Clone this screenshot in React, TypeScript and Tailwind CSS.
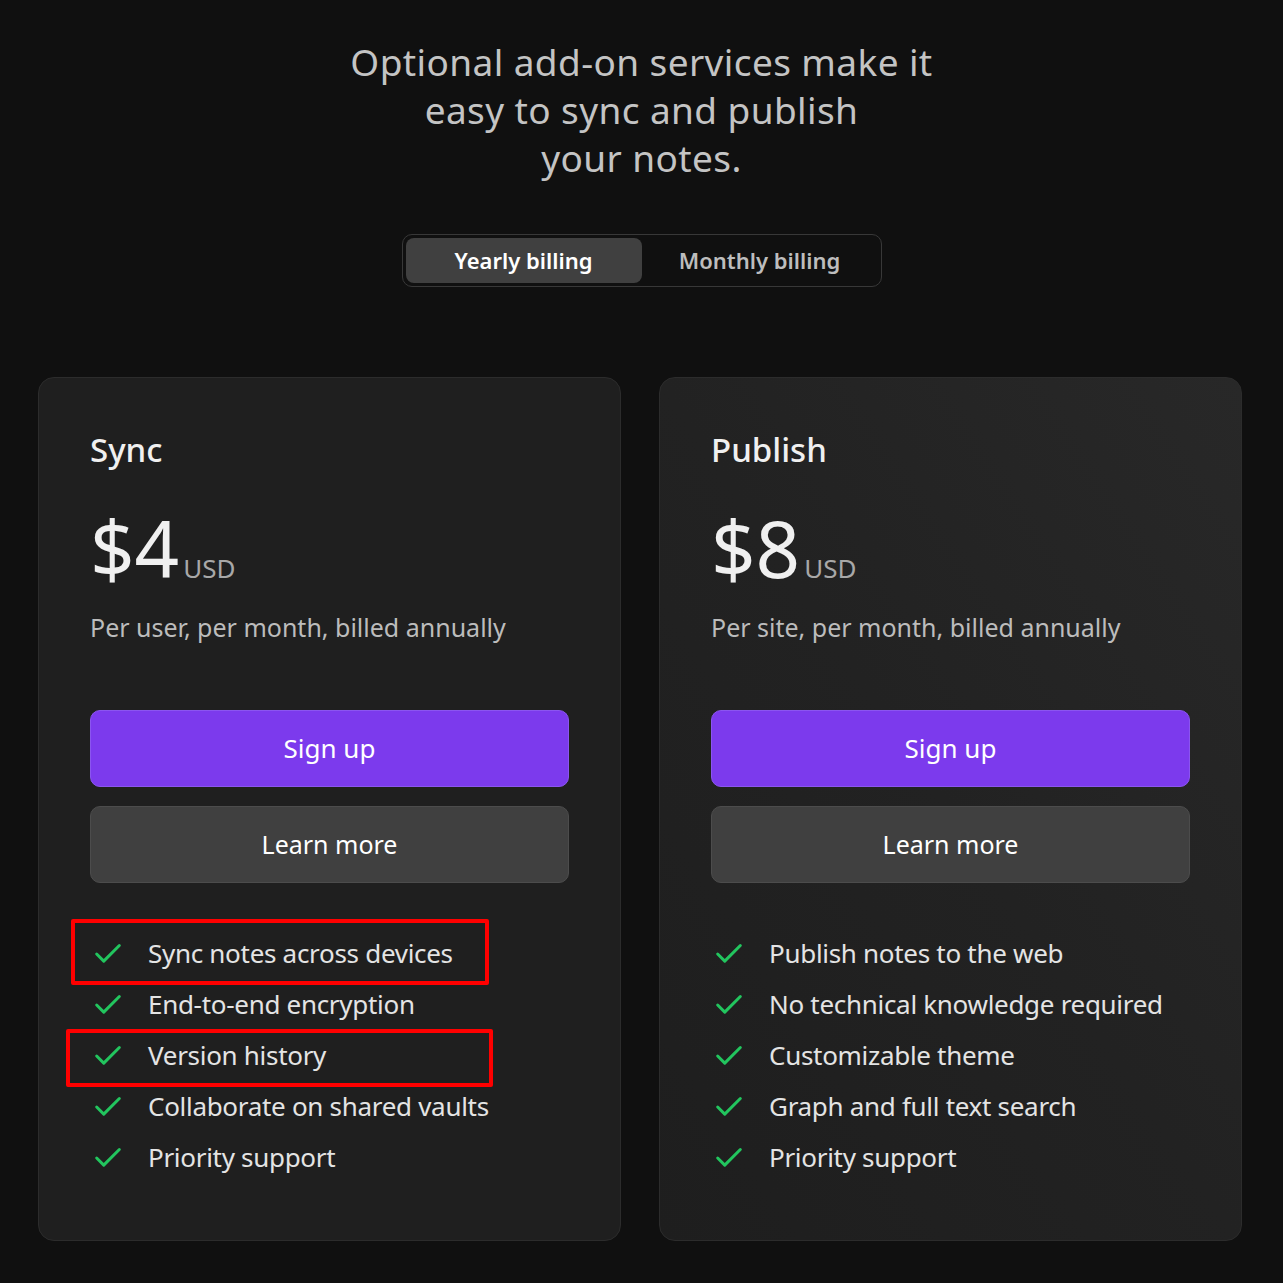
import React, { useState } from "react";
import { Check } from "lucide-react";

const plans = [
  {
    name: "Sync",
    price: "$4",
    note: "Per user, per month, billed annually",
    features: [
      { text: "Sync notes across devices", mark: "a" },
      { text: "End-to-end encryption" },
      { text: "Version history", mark: "b" },
      { text: "Collaborate on shared vaults" },
      { text: "Priority support" },
    ],
  },
  {
    name: "Publish",
    price: "$8",
    note: "Per site, per month, billed annually",
    features: [
      { text: "Publish notes to the web" },
      { text: "No technical knowledge required" },
      { text: "Customizable theme" },
      { text: "Graph and full text search" },
      { text: "Priority support" },
    ],
  },
];

const App = () => {
  const [billing, setBilling] = useState("yearly");
  return (
    <div
      className="min-h-[1283px] w-full bg-[#101010] text-white"
      style={{ fontFamily: '"Noto Sans", "Open Sans", sans-serif' }}
    >
      {/*heading*/}
      <div className="flex flex-col items-center pt-[38px]">
        <h2 className="text-center text-[37px] leading-[48px] font-normal tracking-[0.4px] text-[#c4c4c4]">
          Optional add-on services make it
          <br />
          easy to sync and publish
          <br />
          your notes.
        </h2>
        {/*billing toggle*/}
        <div className="mt-[52px] flex w-[480px] h-[53px] p-[3px] rounded-[10px] border border-[#383838]">
          <button
            onClick={() => setBilling("yearly")}
            className={`w-[236px] rounded-[8px] text-[22px] font-semibold ${billing === "yearly" ? "bg-[#404040] text-white" : "text-[#bdbdbd]"}`}
          >
            Yearly billing
          </button>
          <button
            onClick={() => setBilling("monthly")}
            className={`flex-1 rounded-[8px] text-[22px] font-semibold ${billing === "monthly" ? "bg-[#404040] text-white" : "text-[#bdbdbd]"}`}
          >
            Monthly billing
          </button>
        </div>
      </div>

      {/*cards*/}
      <div className="grid grid-cols-[583px_583px] gap-[38px] pl-[38px] mt-[90px]">
        {plans.map((plan, i) => (
          <div
            key={plan.name}
            className={`h-[864px] rounded-[16px] border border-[#2c2c2c] px-[51px] pt-[50px] ${i === 1 ? "bg-gradient-to-bl from-[#282828] via-[#222222] to-[#1e1e1e]" : "bg-[#1f1f1f]"}`}
          >
            <h3 className="text-[33px] leading-[44px] font-medium text-[#f0f0f0]">
              {plan.name}
            </h3>
            <div className="mt-[31px] flex items-end">
              <span className="text-[78px] leading-[90px] text-[#f0f0f0]">
                {plan.price}
              </span>
              <span className="ml-[4px] mb-[10px] text-[26px] leading-[30px] text-[#a8a8a8]">
                USD
              </span>
            </div>
            <p className="mt-[16px] text-[25px] leading-[36px] text-[#bcbcbc]">
              {plan.note}
            </p>
            <div className="mt-[65px] flex flex-col gap-[19px]">
              <button className="h-[77px] w-full rounded-[10px] border border-[#8b55f0] bg-[#7c3aed] text-[26px] text-white">
                Sign up
              </button>
              <button className="h-[77px] w-full rounded-[10px] border border-[#4c4c4c] bg-[#404040] text-[25px] text-white">
                Learn more
              </button>
            </div>
            <ul className="mt-[45px] flex flex-col">
              {plan.features.map((f) => (
                <li
                  key={f.text}
                  className="relative flex items-center h-[51px] text-[26px] tracking-[-0.3px] text-[#e4e4e4]"
                >
                  <Check
                    size={34}
                    strokeWidth={2.1}
                    className="ml-[1px] text-[#22c55e]"
                  />
                  <span className="ml-[23px]">{f.text}</span>
                  {/*red annotation boxes*/}
                  {f.mark === "a" && (
                    <span className="absolute left-[-19px] top-[-9px] w-[418px] h-[66px] border-[4px] border-[#ff0000] rounded-[2px]" />
                  )}
                  {f.mark === "b" && (
                    <span className="absolute left-[-24px] top-[-1px] w-[427px] h-[58px] border-[4px] border-[#ff0000] rounded-[2px]" />
                  )}
                </li>
              ))}
            </ul>
          </div>
        ))}
      </div>
    </div>
  );
};

export default App;
